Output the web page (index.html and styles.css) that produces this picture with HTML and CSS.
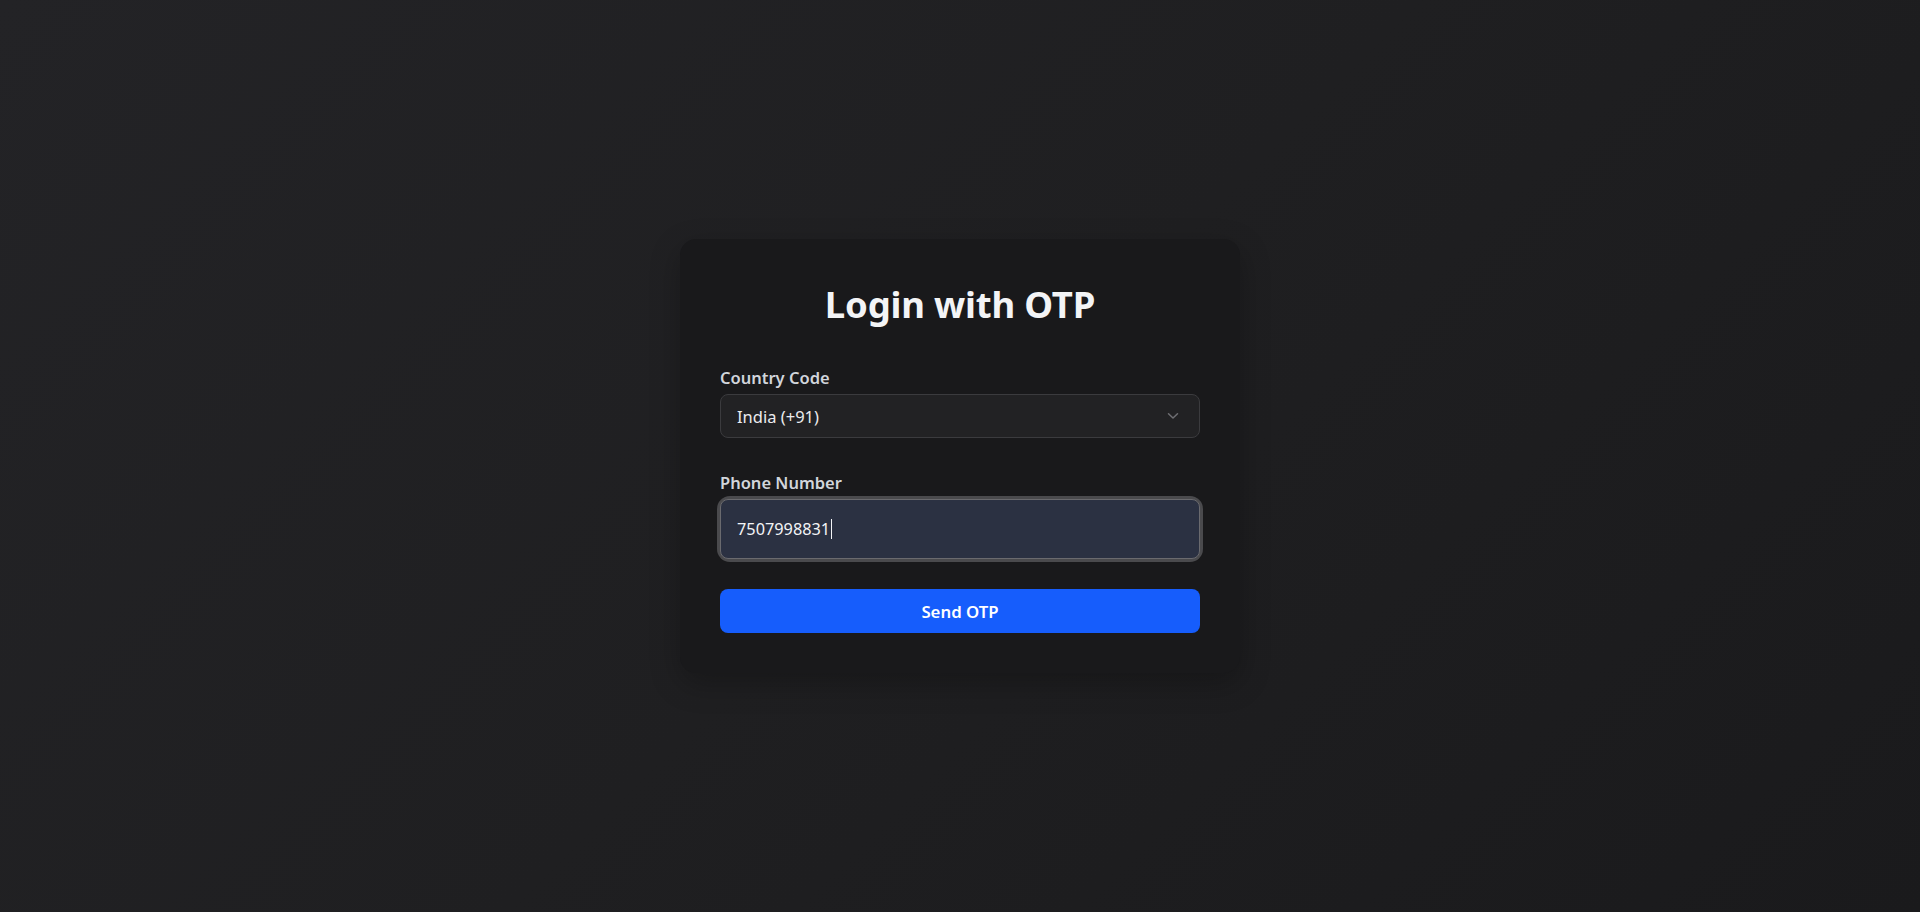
FILE: index.html
```html
<!DOCTYPE html>
<html lang="en">
<head>
<meta charset="utf-8">
<title>Login with OTP</title>
<link rel="stylesheet" href="styles.css">
</head>
<body>
<main class="page">
  <section class="card">
    <h1 class="title">Login with OTP</h1>
    <div class="field field-country">
      <label class="label">Country Code</label>
      <div class="select">
        <span class="select-value">India (+91)</span>
        <svg class="chevron" width="12" height="8" viewBox="0 0 12 8" aria-hidden="true">
          <path d="M1.5 1.8 L6 6 L10.5 1.8" fill="none" stroke="#6f6f73" stroke-width="1.5" stroke-linecap="round" stroke-linejoin="round"/>
        </svg>
      </div>
    </div>
    <div class="field field-phone">
      <label class="label">Phone Number</label>
      <div class="input-ring">
        <div class="input"><span class="input-value">7507998831</span><span class="caret"></span></div>
      </div>
    </div>
    <button class="btn" type="button">Send OTP</button>
  </section>
</main>
</body>
</html>
```

FILE: styles.css
```css
* { box-sizing: border-box; }

html, body {
  margin: 0;
  height: 100%;
}

body {
  font-family: "Noto Sans", "Open Sans", sans-serif;
  background: linear-gradient(135deg, #232326 0%, #1f1f21 50%, #1a1a1c 100%);
  color: #e5e7eb;
}

.page {
  min-height: 100vh;
  display: flex;
  align-items: center;
  justify-content: center;
}

.card {
  width: 560px;
  padding: 40px;
  background: #19191b;
  border-radius: 16px;
  box-shadow: 0 10px 30px rgba(0, 0, 0, 0.25);
}

.title {
  margin: 0 0 37px;
  font-size: 36.5px;
  line-height: 50px;
  font-weight: 700;
  text-align: center;
  color: #f3f4f6;
  letter-spacing: -0.2px;
}

.label {
  display: block;
  font-size: 16.5px;
  line-height: 24px;
  font-weight: 600;
  color: #d1d5db;
  margin-bottom: 4px;
}

.field-country { margin-bottom: 33px; }
.field-phone { margin-bottom: 30px; }

.select {
  height: 44px;
  display: flex;
  align-items: center;
  justify-content: space-between;
  padding: 0 20px 0 16px;
  background: #222224;
  border: 1px solid #3b3b3e;
  border-radius: 8px;
}

.select-value {
  font-size: 16.5px;
  color: #ececee;
}

.chevron { display: block; }

.input-ring {
  border-radius: 10px;
  box-shadow: 0 0 0 3px #4a4a4d;
}

.input {
  height: 60px;
  display: flex;
  align-items: center;
  padding: 0 16px;
  background: #2b3142;
  border: 1px solid #6a6a6e;
  border-radius: 8px;
}

.input-value {
  font-size: 16.3px;
  color: #f3f4f6;
}

.caret {
  display: inline-block;
  width: 1px;
  height: 20px;
  margin-left: 1px;
  background: #f3f4f6;
}

.btn {
  display: block;
  width: 100%;
  height: 44px;
  border: 0;
  border-radius: 8px;
  background: #165dfc;
  color: #ffffff;
  font-family: inherit;
  font-size: 16.8px;
  font-weight: 600;
  cursor: pointer;
}
```
